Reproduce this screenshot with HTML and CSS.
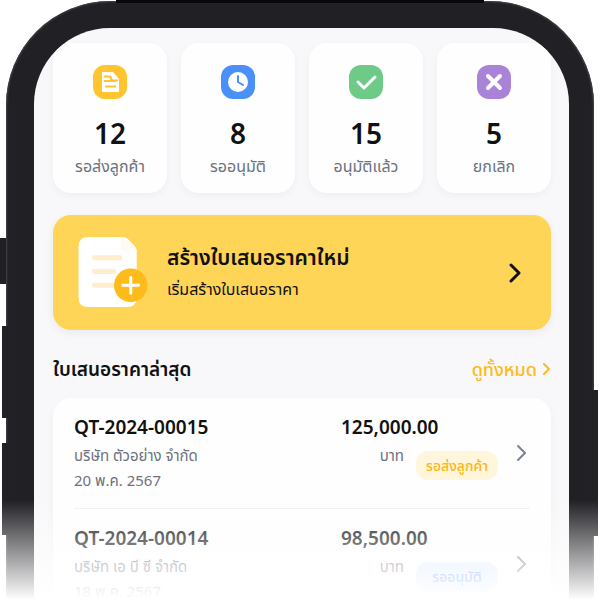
FILE: index.html
```html
<!DOCTYPE html>
<html lang="th">
<head>
    <meta charset="UTF-8">
    <meta name="viewport" content="width=device-width, initial-scale=1">
    <title>ใบเสนอราคา</title>
    <link rel="stylesheet" href="styles.css">
</head>
<body>
    <div class="phone">
        <span class="key key-mute"></span>
        <span class="key key-up"></span>
        <span class="key key-down"></span>
        <span class="key key-power"></span>
        <main class="screen">
            <ul class="stats">
                <li class="stat">
                    <svg class="stat-icon" viewBox="0 0 34 34">
                        <rect width="34" height="34" rx="12" fill="#ffc42e"/>
                        <path d="M9 7h11l6 7v12a1 1 0 0 1-1 1H10a1 1 0 0 1-1-1z" fill="#fff"/>
                        <path d="M11 11.500h5q2 0 2 2t3 2h4M11 16h12M12 21.500h11" stroke="#ffc42e" stroke-width="2" fill="none"/>
                    </svg>
                    <strong>12</strong>
                    <span>รอส่งลูกค้า</span>
                </li>
                <li class="stat">
                    <svg class="stat-icon" viewBox="0 0 34 34">
                        <rect width="34" height="34" rx="12" fill="#4a90f9"/>
                        <circle cx="17" cy="17" r="10" fill="#fff"/>
                        <path d="M17 11v6l5 3" fill="none" stroke="#4a90f9" stroke-width="2" stroke-linecap="round" stroke-linejoin="round"/>
                    </svg>
                    <strong>8</strong>
                    <span>รออนุมัติ</span>
                </li>
                <li class="stat">
                    <svg class="stat-icon" viewBox="0 0 34 34">
                        <rect width="34" height="34" rx="12" fill="#6dcb87"/>
                        <path d="M9 17l6 6 11-11" fill="none" stroke="#fff" stroke-width="3" stroke-linecap="round" stroke-linejoin="round"/>
                    </svg>
                    <strong>15</strong>
                    <span>อนุมัติแล้ว</span>
                </li>
                <li class="stat">
                    <svg class="stat-icon" viewBox="0 0 34 34">
                        <rect width="34" height="34" rx="12" fill="#a983d8"/>
                        <path d="M11 11l12 12M23 11L11 23" stroke="#fff" stroke-width="4" stroke-linecap="round"/>
                    </svg>
                    <strong>5</strong>
                    <span>ยกเลิก</span>
                </li>
            </ul>

            <a class="create" href="#new">
                <svg class="create-icon" viewBox="0 0 72 72">
                    <path d="M10 0h35q3 0 5 2l7 7q2 2 2 5v47q0 10-10 10H10Q0 71 0 61V10Q0 0 10 0z" fill="#fff"/>
                    <path d="M43 1v10q0 4 4 4h12q0-3-2-5l-8-8q-2-2-6-1z" fill="#fffaf2"/>
                    <path d="M16 21h26M16 35h20M16 49h22" stroke="#ffedce" stroke-width="5" stroke-linecap="round"/>
                    <circle cx="53" cy="49" r="17" fill="#fdbb1c"/>
                    <path d="M53 41v16M45 49h16" stroke="#fff" stroke-width="3" stroke-linecap="round"/>
                </svg>
                <span class="create-text">
                    <strong>สร้างใบเสนอราคาใหม่</strong>
                    <span>เริ่มสร้างใบเสนอราคา</span>
                </span>
                <svg class="create-arrow" viewBox="0 0 12 20"><path d="M2 2l8 8-8 8"/></svg>
            </a>

            <div class="heading">
                <h2>ใบเสนอราคาล่าสุด</h2>
                <a href="#all">ดูทั้งหมด
                    <svg viewBox="0 0 8 12"><path d="M1 1l5 5-5 5"/></svg>
                </a>
            </div>

            <ul class="quotes">
                <li>
                    <a class="quote" href="#QT-2024-00015">
                        <span class="info">
                            <strong>QT-2024-00015</strong>
                            <span>บริษัท ตัวอย่าง จำกัด</span>
                            <span>20 พ.ค. 2567</span>
                        </span>
                        <span class="price">
                            <strong>125,000.00</strong>
                            <span class="unit">บาท <em class="badge wait">รอส่งลูกค้า</em></span>
                        </span>
                        <svg class="arrow" viewBox="0 0 12 18"><path d="M2 2l7 7-7 7"/></svg>
                    </a>
                </li>
                <li>
                    <a class="quote" href="#QT-2024-00014">
                        <span class="info">
                            <strong>QT-2024-00014</strong>
                            <span>บริษัท เอ บี ซี จำกัด</span>
                            <span>18 พ.ค. 2567</span>
                        </span>
                        <span class="price">
                            <strong>98,500.00</strong>
                            <span class="unit">บาท <em class="badge approve">รออนุมัติ</em></span>
                        </span>
                        <svg class="arrow" viewBox="0 0 12 18"><path d="M2 2l7 7-7 7"/></svg>
                    </a>
                </li>
            </ul>
        </main>
    </div>
</body>
</html>
```
FILE: styles.css
```css
*{
    margin: 0;
    padding: 0;
    box-sizing: border-box;
}
body{
    height: 100vh;
    overflow: hidden;
    background: #fff;
    color: #111;
    font-family: "Noto Sans", "Noto Sans Thai", sans-serif;
}
/* bottom of the phone fades into the page */
body:after{
    position: absolute;
    content: "";
    left: 0;
    right: 0;
    bottom: 0;
    height: 100px;
    background: linear-gradient(rgba(255,255,255,0), #fff);
    pointer-events: none;
}
ul{
    list-style: none;
}
a{
    color: inherit;
    text-decoration: none;
}
svg{
    display: block;
    flex: none;
}
.phone{
    position: relative;
    margin: 1px 6px 0;
    padding: 27px 25px 0 28px;
    border-radius: 104px 104px 0 0;
    background: #202025;
    box-shadow: inset 0 0 2px 1px #45454b;
}
/* dark line along the top edge */
.phone:before{
    position: absolute;
    content: "";
    top: -1px;
    left: 110px;
    right: 110px;
    height: 3px;
    background: #08080a;
}
.key{
    position: absolute;
    width: 6px;
    height: 92px;
    background: #202025;
}
.key-mute{
    top: 237px;
    left: -6px;
    height: 46px;
}
.key-up{
    top: 325px;
    left: -4px;
}
.key-down{
    top: 442px;
    left: -4px;
}
.key-power{
    top: 389px;
    right: -4px;
    height: 146px;
}
.screen{
    padding: 15px 18px 0 19px;
    border-radius: 76px 76px 0 0;
    background: #f8f8fa;
    overflow: hidden;
}
.stats{
    display: grid;
    grid-template-columns: repeat(4, 1fr);
    gap: 14px;
}
.stat{
    display: flex;
    flex-direction: column;
    align-items: center;
    height: 150px;
    padding-top: 22px;
    border-radius: 18px;
    background: #fefefe;
    box-shadow: 0 3px 8px rgba(30,30,60,.04);
}
.stat-icon{
    width: 34px;
    height: 34px;
}
.stat strong{
    margin-top: 16px;
    font-size: 28px;
    font-weight: 600;
    line-height: 36px;
}
.stat span{
    margin-top: 2px;
    color: #6b7280;
    font-size: 16px;
    line-height: 26px;
}
.create{
    display: flex;
    align-items: center;
    margin-top: 22px;
    padding: 22px 30px 22px 25px;
    border-radius: 18px;
    background: #fed556;
    box-shadow: 0 3px 10px rgba(30,30,60,.06);
}
.create-icon{
    width: 72px;
    height: 71px;
}
.create-text{
    flex: 1;
    margin-left: 17px;
}
.create-text strong,
.create-text span{
    display: block;
    font-size: 21px;
    font-weight: 600;
    line-height: 32px;
}
.create-text span{
    font-size: 16px;
    font-weight: 400;
}
.create-arrow{
    width: 12px;
    height: 20px;
}
svg.create-arrow path,
.heading path,
.arrow path{
    fill: none;
    stroke: #111;
    stroke-width: 3;
    stroke-linecap: round;
    stroke-linejoin: round;
}
.heading{
    display: flex;
    align-items: center;
    justify-content: space-between;
    margin-top: 23px;
    line-height: 32px;
}
.heading h2{
    font-size: 19px;
    font-weight: 600;
}
.heading a{
    display: flex;
    align-items: center;
    gap: 6px;
    color: #fdbb1c;
    font-size: 18px;
    font-weight: 500;
}
.heading svg{
    width: 8px;
    height: 12px;
}
.heading path{
    stroke: #fdbb1c;
    stroke-width: 2;
}
.quotes{
    margin-top: 13px;
    padding: 0 21px;
    border-radius: 18px;
    background: #fefefe;
    box-shadow: 0 3px 8px rgba(30,30,60,.04);
}
.quotes li + li{
    border-top: 1px solid #f1f1f3;
}
.quote{
    display: flex;
    align-items: center;
    height: 110px;
}
.info{
    flex: 1;
}
.info span{
    display: block;
    color: #6b7280;
    font-size: 15px;
    line-height: 25px;
}
.quote strong{
    display: block;
    font-size: 19px;
    font-weight: 600;
    line-height: 32px;
}
.info,
.price{
    height: 84px;
}
.price{
    width: 157px;
}
.unit{
    display: flex;
    justify-content: flex-end;
    gap: 12px;
    color: #6b7280;
    font-size: 15px;
    line-height: 25px;
}
.badge{
    width: 82px;
    height: 29px;
    margin-top: 8px;
    border-radius: 12px;
    font-size: 14px;
    font-style: normal;
    font-weight: 500;
    line-height: 29px;
    text-align: center;
}
.wait{
    background: #fff6dc;
    color: #fdb515;
}
.approve{
    background: #dfeaff;
    color: #4a90f9;
}
.arrow{
    width: 12px;
    height: 18px;
    margin: 0 2px 0 18px;
}
.arrow path{
    stroke: #7b8290;
    stroke-width: 2;
}
```
